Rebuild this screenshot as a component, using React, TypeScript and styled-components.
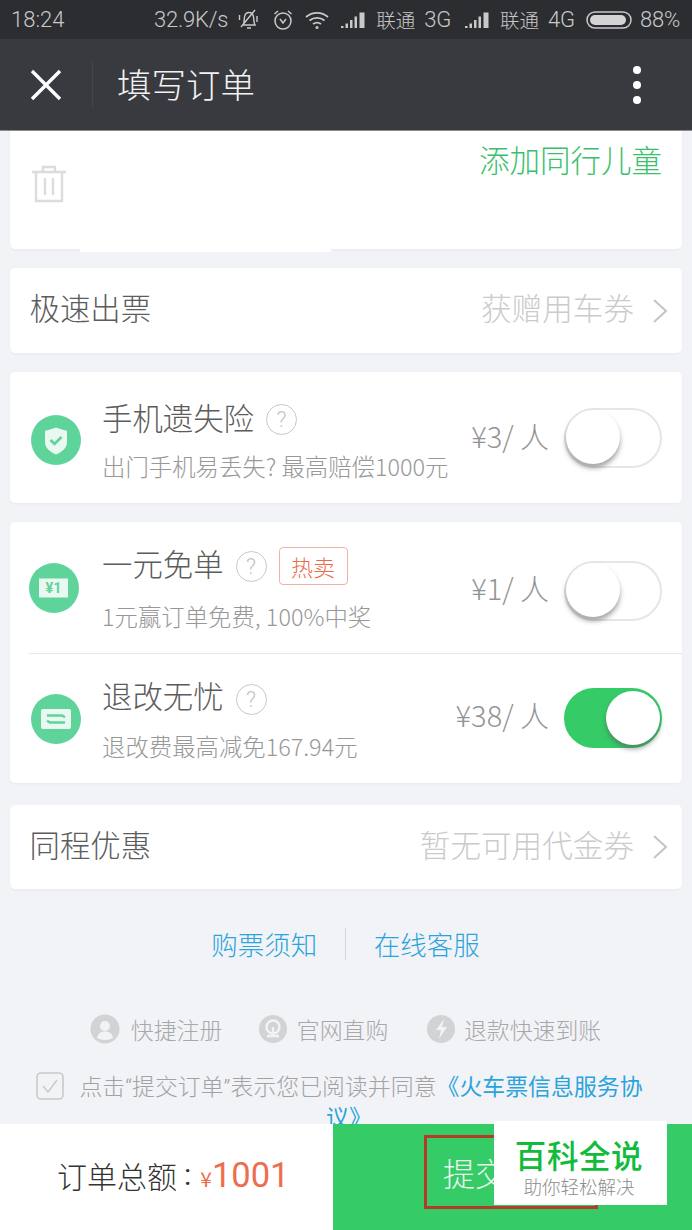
import React from "react";
import styled, { createGlobalStyle } from "styled-components";

const Global = createGlobalStyle`
  html, body { margin: 0; padding: 0; background: #f2f3f7; }
  * { box-sizing: border-box; }
  body { font-family: "Noto Sans CJK SC", "Noto Sans", sans-serif; }
`;

const Page = styled.div`
  width: 692px; height: 1230px; display: flex; flex-direction: column; overflow: hidden; position: relative;
  background: #f2f3f7;
`;
const StatusBar = styled.div`
  height: 39px; flex: none; background: #2c2d31; color: #c9c9ca; display: flex; align-items: center;
  padding: 0 12px 0 11px; font-family: Roboto, sans-serif; font-size: 22px; font-weight: 300;
`;
const StatusTime = styled.span` margin-right: auto; `;
const StatusRight = styled.div` display: flex; align-items: center; `;
const StatusCjk = styled.span<{ $l?: number }>`
  font-family: "Noto Sans CJK SC", sans-serif; font-size: 19.5px; margin-left: ${p => p.$l ?? 0}px; line-height: 1;
`;
const StatusText = styled.span<{ $l?: number }>` margin-left: ${p => p.$l ?? 0}px; letter-spacing: -0.2px; `;
const StatusIcon = styled.svg<{ $l?: number }>` margin-left: ${p => p.$l ?? 0}px; display: block; `;

const NavBar = styled.div`
  height: 92px; flex: none; background: #393a3f; border-bottom: 1px solid #8c8c8f; display: flex; align-items: center;
  padding: 0 51px 0 30px; color: #fff;
`;
const NavDivider = styled.div` width: 1px; height: 46px; background: #45464b; margin: 0 24px 0 30px; `;
const NavTitle = styled.div` font-size: 34.5px; font-weight: 300; color: #f2f2f2; flex: 1; line-height: 1; padding-bottom: 2px;`;
const Dots = styled.div` display: flex; flex-direction: column; gap: 7px; `;
const Dot = styled.span` width: 8px; height: 8px; border-radius: 50%; background: #fff; `;

const Content = styled.div`
  flex: 1; min-height: 0; padding: 0 10px; display: flex; flex-direction: column; overflow: hidden;
`;
const Card = styled.div<{ $h: number; $top: number }>`
  height: ${p => p.$h}px; margin-top: ${p => p.$top}px; flex: none; background: #fff; border-radius: 5px;
  box-shadow: 0 1px 3px rgba(0,0,0,.04);
`;
const TopCard = styled(Card)`
  display: flex; align-items: flex-start; justify-content: space-between; padding: 9px 20px 0 21px;
  border-radius: 0 0 5px 5px; position: relative;
  &::after { content: ""; position: absolute; left: 70px; top: 100%; width: 251px; height: 3px; background: #fff; }
`;
const GreenLink = styled.div` color: #3abf6c; font-size: 30.5px; font-weight: 300; line-height: 38px; `;
const Trash = styled.svg` margin-top: 25px; display: block; `;
const LinkRow = styled(Card)`
  display: flex; align-items: center; padding: 0 14px 0 19.5px;
`;
const LinkLabel = styled.div` flex: 1; font-size: 30.4px; color: #5c5c5c; font-weight: 300; line-height: 1; padding-bottom: 6px; `;
const LinkHint = styled.div` font-size: 30.6px; color: #cbcbcb; font-weight: 300; line-height: 1; padding-bottom: 6px; `;
const Chevron = styled.svg` margin-left: 18px; display: block; `;

const ServiceRow = styled.div<{ $h: number; $pl: number; $pad: number }>`
  height: ${p => p.$h}px; display: flex; align-items: center; padding: ${p => p.$pad}px 20px 0 ${p => p.$pl}px;
`;
const Divider = styled.div` height: 1px; background: #e8e8ea; margin-left: 19px; `;
const RoundIcon = styled.svg` flex: none; display: block; `;
const ServiceText = styled.div<{ $gap: number }>` flex: 1; margin-left: ${p => p.$gap}px; min-width: 0; `;
const TitleLine = styled.div` display: flex; align-items: center; height: 38px; `;
const ServiceTitle = styled.span` font-size: 30.4px; font-weight: 300; color: #5c5c5c; line-height: 1; `;
const Help = styled.span<{ $drop: number }>`
  width: 31px; height: 31px; border-radius: 50%; border: 1px solid #c8c8c8; color: #c4c4c4; font-size: 22px;
  display: flex; align-items: center; justify-content: center; margin: ${p => p.$drop}px 0 0 12px; font-family: Roboto, sans-serif; font-weight: 300; flex: none;
`;
const HotTag = styled.span`
  width: 69px; height: 38px; border: 1px solid #efb3a6; border-radius: 4px; color: #ec6a4c; font-size: 22px; font-weight: 300;
  display: flex; align-items: center; justify-content: center; margin: 6px 0 0 12px; line-height: 1; flex: none;
`;
const ServiceSub = styled.div<{ $gap: number }>`
  font-size: 23.4px; color: #989898; font-weight: 300; line-height: 30px; margin-top: ${p => p.$gap}px; white-space: nowrap;
`;
const Price = styled.div<{ $lift: number }>`
  font-size: 29px; color: #949494; font-weight: 300; margin-right: 15px; line-height: 1; white-space: nowrap; padding-bottom: ${p => p.$lift}px;
`;
const Track = styled.div<{ $on?: boolean; $shift: number }>`
  width: 98px; height: 60px; border-radius: 30px; flex: none; position: relative; margin-top: ${p => p.$shift}px;
  background: ${p => (p.$on ? "#35cc67" : "#fff")};
  border: 2px solid ${p => (p.$on ? "#35cc67" : "#e6e6e6")};
`;
const Knob = styled.div<{ $on?: boolean }>`
  position: absolute; top: 0; ${p => (p.$on ? "right: 0;" : "left: 0;")}
  width: 54px; height: 54px; border-radius: 50%; background: #fff; margin-top: ${p => (p.$on ? 1 : 0)}px;
  box-shadow: 0 4px 5px rgba(90,90,90,.55);
`;

const Links = styled.div`
  display: flex; justify-content: center; align-items: center; margin-top: 39px; height: 32px; padding-right: 1px;
`;
const BlueLink = styled.span` color: #2ba3dc; font-size: 26.5px; font-weight: 300; line-height: 1; `;
const LinkSep = styled.span` width: 1px; height: 32px; background: #d6d6d8; margin: 0 28px 0 27.5px; `;
const Trust = styled.div`
  display: flex; justify-content: center; align-items: center; margin-top: 54px; height: 32px; padding-right: 1px;
`;
const TrustItem = styled.div<{ $l?: number }>` display: flex; align-items: center; margin-left: ${p => p.$l ?? 0}px; `;
const TrustText = styled.span<{ $l: number }>` color: #a8a8aa; font-size: 22.9px; font-weight: 300; margin-left: ${p => p.$l}px; line-height: 1; `;
const TrustIcon = styled.svg` display: block; `;
const Agree = styled.div`
  position: relative; margin-top: 27px; padding: 0 30px 0 60px; text-align: center; color: #a2a2a4; font-size: 22.9px; line-height: 28px;
  font-weight: 300; font-family: Roboto, "Noto Sans CJK SC", sans-serif;
`;
const CheckBox = styled.svg` position: absolute; left: 26px; top: 1px; display: block; `;
const AgreeLink = styled.span`
  color: #2ba3dc; font-weight: 400; font-family: "Noto Sans CJK SC", sans-serif;
  &::after { content: ""; display: inline-block; width: 24px; }
`;

const Footer = styled.div` height: 106px; flex: none; display: flex; position: relative; z-index: 1; `;
const Total = styled.div`
  width: 333px; background: #fff; display: flex; align-items: center; padding: 0 0 4px 57px; color: #333; font-size: 30px; font-weight: 300; line-height: 1;
`;
const Colon = styled.span` margin-left: 7px; font-family: Roboto, sans-serif; font-weight: 400; `;
const Yen = styled.span` color: #ec6e4e; font-size: 21px; margin: 6px 0 0 9px; font-weight: 400; `;
const Amount = styled.span` color: #ec6e4e; font-size: 34.5px; font-family: Roboto, sans-serif; font-weight: 400; margin-bottom: -1px;`;
const Submit = styled.div`
  flex: 1; background: #35cc67; color: #eaf7ee; font-size: 32px; font-weight: 300; position: relative;
`;
const SubmitBox = styled.div`
  position: absolute; left: 91px; top: 11px; width: 174px; height: 74px; border: 3px solid #b33b27;
  display: flex; align-items: center; padding-left: 16px; line-height: 1;
`;
const Watermark = styled.div`
  position: absolute; left: 494px; top: 1121px; width: 173px; height: 84px; background: #fff; z-index: 2;
  display: flex; flex-direction: column; align-items: center; padding: 15px 3px 0 0;
`;
const WmTitle = styled.div` color: #11bb3c; font-size: 31.5px; font-weight: 500; line-height: 36px; letter-spacing: .6px; `;
const WmSub = styled.div` color: #8c8c8c; font-size: 18.5px; font-weight: 300; line-height: 24px; margin-top: 2px; `;

const ShieldIcon = () => (
  <RoundIcon width="52" height="52" viewBox="0 0 52 52">
    <circle cx="26" cy="26" r="25" fill="#5fd49a" />
    <path d="M26 13.5l11 3.500v11c0 6-5 10-11 12.500C20 38 15 34 15 28V17z" fill="#e9f8f0" />
    <path d="M20.5 26l4 4 7-7" fill="none" stroke="#5fd49a" strokeWidth="2.6" />
  </RoundIcon>
);
const YenIcon = () => (
  <RoundIcon width="50" height="50" viewBox="0 0 50 50">
    <circle cx="25" cy="25" r="25" fill="#5fd49a" />
    <rect x="10" y="15.5" width="29" height="19" fill="#e9f8f0" />
    <text x="24.5" y="30" textAnchor="middle" fontSize="14.5" fontWeight="700" fill="#5fd49a" fontFamily="Roboto, sans-serif">¥1</text>
  </RoundIcon>
);
const SwapIcon = () => (
  <RoundIcon width="50" height="50" viewBox="0 0 50 50">
    <circle cx="25" cy="25" r="25" fill="#5fd49a" />
    <rect x="10" y="15" width="30" height="20" rx="2" fill="#e9f8f0" />
    <path d="M16 21.5h15l3 1.8M34 28.5H19l-3-1.8" fill="none" stroke="#5fd49a" strokeWidth="2.4" />
  </RoundIcon>
);

const Service = ({ h, pl, gap, pad, subGap, drop, lift, shift, icon, title, tag, sub, price, on }: {
  h: number; pl: number; gap: number; pad: number; subGap: number; drop: number; lift: number; shift: number;
  icon: React.ReactNode; title: string; tag?: string; sub: string; price: string; on?: boolean;
}) => (
  <ServiceRow $h={h} $pl={pl} $pad={pad}>
    {icon}
    <ServiceText $gap={gap}>
      <TitleLine>
        <ServiceTitle>{title}</ServiceTitle>
        <Help $drop={drop}>?</Help>
        {tag && <HotTag>{tag}</HotTag>}
      </TitleLine>
      <ServiceSub $gap={subGap}>{sub}</ServiceSub>
    </ServiceText>
    <Price $lift={lift}>{price}</Price>
    <Track $on={on} $shift={shift}><Knob $on={on} /></Track>
  </ServiceRow>
);

const Signal = ({ l }: { l: number }) => (
  <StatusIcon $l={l} width="26" height="18" viewBox="0 0 26 18">
    <path d="M1 15h2.500v2H1zM5.500 12.500H8V17H5.500zM10 9h2.500v8H10zM14.500 5.500H17V17h-2.500zM19.500 1.500H24.500V17h-5z" fill="#c9c9ca" />
  </StatusIcon>
);

export default function App() {
  return (
    <Page>
      <Global />
      <StatusBar>
        <StatusTime>18:24</StatusTime>
        <StatusRight>
          <StatusText>32.9K/s</StatusText>
          <StatusIcon $l={9} width="24" height="24" viewBox="0 0 24 24" fill="none" stroke="#c9c9ca" strokeWidth="1.4">
            <path d="M6 17c1.500-2 1-5 1.500-8S10 4.500 12 4.500s4 1.500 4.500 4.500.2 6 1.500 8zM10 20h4M4 19L18 2M20 8v6M2.500 7v5" />
          </StatusIcon>
          <StatusIcon $l={10} width="24" height="24" viewBox="0 0 24 24" fill="none" stroke="#c9c9ca" strokeWidth="1.5">
            <circle cx="12" cy="13" r="8" />
            <path d="M9 11l3 4 3-4M3.500 6L7 3M20.500 6L17 3" />
          </StatusIcon>
          <StatusIcon $l={9} width="26" height="22" viewBox="0 0 26 22" fill="none" stroke="#c9c9ca" strokeWidth="1.8">
            <path d="M2 8c6.500-5.500 15.500-5.500 22 0M5.500 11.500c4.500-3.500 10.500-3.500 15 0M9 15c2.500-1.800 5.500-1.800 8 0" />
            <circle cx="13" cy="18.5" r="1.5" fill="#c9c9ca" stroke="none" />
          </StatusIcon>
          <Signal l={10} />
          <StatusCjk $l={10}>联通</StatusCjk>
          <StatusText $l={9}>3G</StatusText>
          <Signal l={13} />
          <StatusCjk $l={10}>联通</StatusCjk>
          <StatusText $l={9}>4G</StatusText>
          <StatusIcon $l={11} width="46" height="20" viewBox="0 0 46 20">
            <rect x="1" y="2" width="44" height="16" rx="8" fill="none" stroke="#c9c9ca" strokeWidth="1.5" />
            <rect x="4" y="5" width="36" height="10" rx="5" fill="#d4d4d4" />
          </StatusIcon>
          <StatusText $l={8}>88%</StatusText>
        </StatusRight>
      </StatusBar>
      <NavBar>
        <svg width="32" height="32" viewBox="0 0 32 32" fill="none" stroke="#fff" strokeWidth="3.4" style={{ display: "block" }}>
          <path d="M2 2l28 28M30 2L2 30" />
        </svg>
        <NavDivider />
        <NavTitle>填写订单</NavTitle>
        <Dots><Dot /><Dot /><Dot /></Dots>
      </NavBar>
      <Content>
        <TopCard $h={118} $top={0}>
          <Trash width="36" height="38" viewBox="0 0 36 38" fill="none" stroke="#dcdcdc" strokeWidth="2.4">
            <path d="M1 7h34M12 7V2h12v5M5 7v29h26V7M14 13v17M22 13v17" />
          </Trash>
          <GreenLink>添加同行儿童</GreenLink>
        </TopCard>
        <LinkRow $h={85} $top={19}>
          <LinkLabel>极速出票</LinkLabel>
          <LinkHint>获赠用车券</LinkHint>
          <Chevron width="16" height="26" viewBox="0 0 16 26" fill="none" stroke="#c4c4c4" strokeWidth="2"><path d="M2 2l12 11L2 24" /></Chevron>
        </LinkRow>
        <Card $h={131} $top={19}>
          <Service h={131} pl={20} gap={20} pad={4} subGap={15} drop={4} lift={8} shift={-4} icon={<ShieldIcon />} title="手机遗失险" sub="出门手机易丢失? 最高赔偿1000元" price="¥3/ 人" />
        </Card>
        <Card $h={261} $top={19}>
          <Service h={131} pl={19} gap={23} pad={0} subGap={19} drop={6} lift={0} shift={6} icon={<YenIcon />} title="一元免单" tag="热卖" sub="1元赢订单免费, 100%中奖" price="¥1/ 人" />
          <Divider />
          <Service h={129} pl={21} gap={21} pad={0} subGap={16} drop={8} lift={8} shift={-2} icon={<SwapIcon />} title="退改无忧" sub="退改费最高减免167.94元" price="¥38/ 人" on />
        </Card>
        <LinkRow $h={84} $top={22}>
          <LinkLabel>同程优惠</LinkLabel>
          <LinkHint>暂无可用代金券</LinkHint>
          <Chevron width="16" height="26" viewBox="0 0 16 26" fill="none" stroke="#c4c4c4" strokeWidth="2"><path d="M2 2l12 11L2 24" /></Chevron>
        </LinkRow>
        <Links>
          <BlueLink>购票须知</BlueLink>
          <LinkSep />
          <BlueLink>在线客服</BlueLink>
        </Links>
        <Trust>
          <TrustItem>
            <TrustIcon width="30" height="30" viewBox="0 0 30 30">
              <circle cx="15" cy="15" r="14.5" fill="#d2d3d5" />
              <circle cx="15" cy="12" r="5" fill="#f2f3f7" />
              <path d="M7 24c1-5 4-6.500 8-6.500s7 1.500 8 6.500c-4 2.500-12 2.500-16 0z" fill="#f2f3f7" />
            </TrustIcon>
            <TrustText $l={11}>快捷注册</TrustText>
          </TrustItem>
          <TrustItem $l={36.5}>
            <TrustIcon width="28" height="30" viewBox="0 0 28 30">
              <circle cx="14" cy="15" r="14" fill="#d2d3d5" />
              <circle cx="14" cy="13" r="6.5" fill="none" stroke="#f2f3f7" strokeWidth="2.4" />
              <path d="M8 22h12M14 13v8" stroke="#f2f3f7" strokeWidth="2.4" fill="none" />
            </TrustIcon>
            <TrustText $l={10}>官网直购</TrustText>
          </TrustItem>
          <TrustItem $l={38.5}>
            <TrustIcon width="28" height="30" viewBox="0 0 28 30">
              <circle cx="14" cy="15" r="14" fill="#d2d3d5" />
              <path d="M17 5l-8 11h5l-2 9 8-12h-5z" fill="#f2f3f7" />
            </TrustIcon>
            <TrustText $l={9}>退款快速到账</TrustText>
          </TrustItem>
        </Trust>
        <Agree>
          <CheckBox width="28" height="28" viewBox="0 0 28 28" fill="none">
            <rect x="1" y="1" width="26" height="26" rx="4" stroke="#c9c9cb" strokeWidth="1.6" />
            <path d="M7 14l5 6 9-12" stroke="#c9c9cb" strokeWidth="1.4" />
          </CheckBox>
          点击“提交订单”表示您已阅读并同意<AgreeLink>《火车票信息服务协议》</AgreeLink>
        </Agree>
      </Content>
      <Footer>
        <Total>订单总额<Colon>:</Colon><Yen>¥</Yen><Amount>1001</Amount></Total>
        <Submit><SubmitBox>提交订单</SubmitBox></Submit>
      </Footer>
      <Watermark>
        <WmTitle>百科全说</WmTitle>
        <WmSub>助你轻松解决</WmSub>
      </Watermark>
    </Page>
  );
}
